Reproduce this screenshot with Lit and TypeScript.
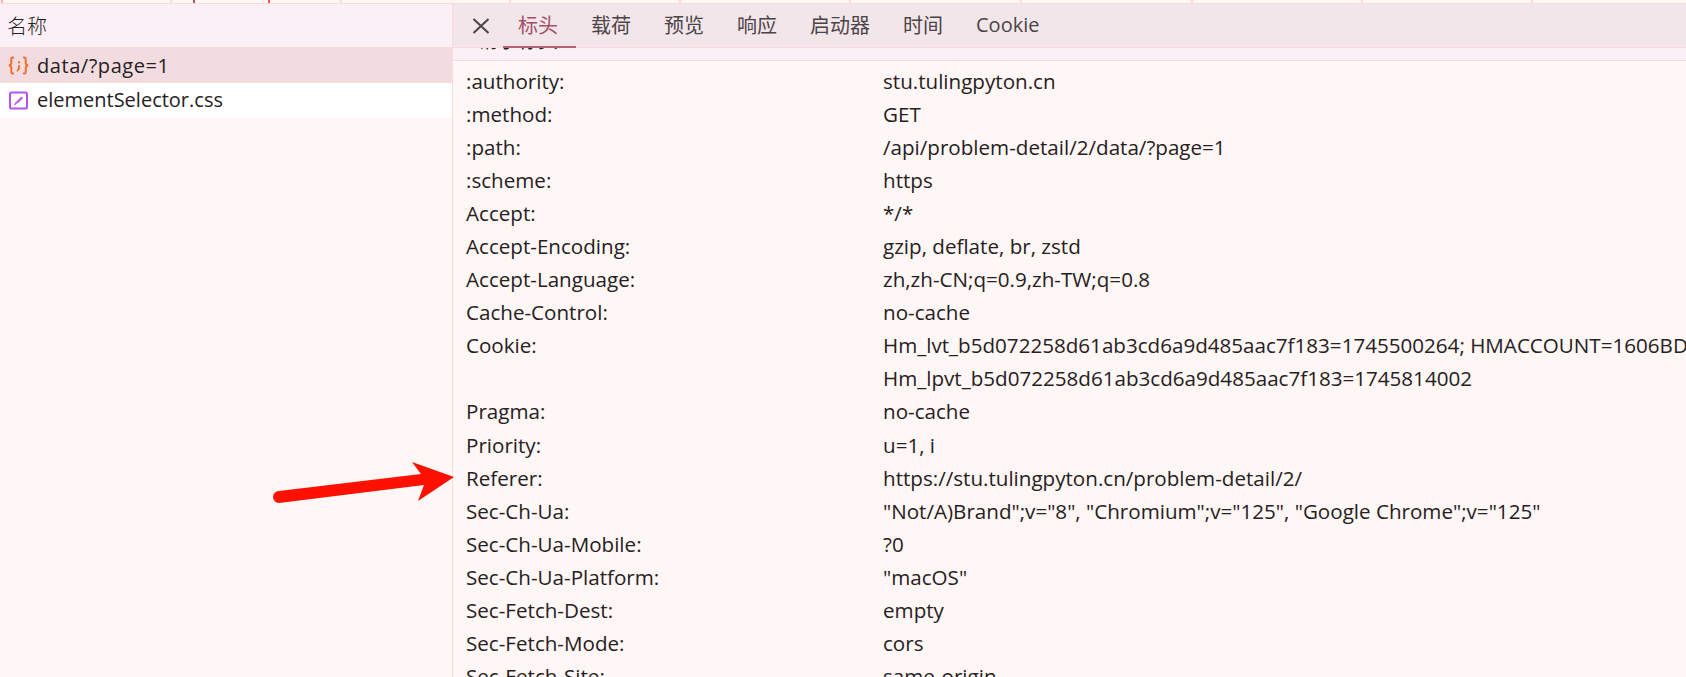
import { LitElement, html, css } from "lit";
import { customElement } from "lit/decorators.js";

const rows: [string, string][] = [
  [":authority:", "stu.tulingpyton.cn"],
  [":method:", "GET"],
  [":path:", "/api/problem-detail/2/data/?page=1"],
  [":scheme:", "https"],
  ["Accept:", "*/*"],
  ["Accept-Encoding:", "gzip, deflate, br, zstd"],
  ["Accept-Language:", "zh,zh-CN;q=0.9,zh-TW;q=0.8"],
  ["Cache-Control:", "no-cache"],
  ["Cookie:", "Hm_lvt_b5d072258d61ab3cd6a9d485aac7f183=1745500264; HMACCOUNT=1606BD"],
  ["", "Hm_lpvt_b5d072258d61ab3cd6a9d485aac7f183=1745814002"],
  ["Pragma:", "no-cache"],
  ["Priority:", "u=1, i"],
  ["Referer:", "https://stu.tulingpyton.cn/problem-detail/2/"],
  ["Sec-Ch-Ua:", "\"Not/A)Brand\";v=\"8\", \"Chromium\";v=\"125\", \"Google Chrome\";v=\"125\""],
  ["Sec-Ch-Ua-Mobile:", "?0"],
  ["Sec-Ch-Ua-Platform:", "\"macOS\""],
  ["Sec-Fetch-Dest:", "empty"],
  ["Sec-Fetch-Mode:", "cors"],
  ["Sec-Fetch-Site:", "same-origin"],
];
const tabs = ["标头", "载荷", "预览", "响应", "启动器", "时间", "Cookie"];
const strip: [number, string][] = [
  [3, "first"], [169, ""], [23, "dark"], [75, "red"], [72, ""], [169, ""], [170, ""],
  [170, ""], [171, ""], [171, ""], [170, ""], [170, ""],
];

@customElement("app-root")
export class AppRoot extends LitElement {
  static styles = css`
    :host { display: block; width: 1686px; height: 677px; overflow: hidden; position: relative; background: #fff7f6;
      font-family: "Open Sans", "Noto Sans CJK SC", sans-serif; font-size: 20.6px; color: #262022; }
    .strip { display: flex; height: 3px; border-bottom: 1px solid #fadadd; background: #fff7f6; }
    .strip span { border-right: 2px solid #fadadd; box-sizing: border-box; }
    .strip span.first { border-right-color: #fbb8bc; }
    .strip span.dark { border-right-color: #9a5a70; }
    .strip span.red { border-right-color: #f05050; }
    .main { display: flex; height: 673px; }
    .left { width: 453px; flex: none; border-right: 1px solid #fadadd; box-sizing: border-box; }
    .lhead { height: 43px; background: #fbf0f6; border-bottom: 1px solid #fadadd; display: flex; align-items: center; padding-left: 7px; font-size: 20px; font-weight: 300; }
    .file { height: 35px; display: flex; align-items: center; padding-left: 8px; gap: 8px; white-space: nowrap; font-size: 20px; }
    .file.sel { background: #f3dce0; }
    .file.sel span { letter-spacing: 0.55px; }
    .file.white { background: #fff; }
    .file.white span { margin-bottom: 2px; }
    .file svg { width: 21px; height: 21px; flex: none; }
    .right { flex: 1; min-width: 0; display: flex; flex-direction: column; }
    .tabs { height: 43px; flex: none; background: #f2e6ea; border-bottom: 1px solid #fadadd; display: flex; align-items: stretch; }
    .close { width: 44px; padding-left: 6px; flex: none; display: flex; align-items: center; justify-content: center; }
    .close svg { width: 18px; height: 16px; }
    .tab { padding: 0 18px 3px 15px; display: flex; align-items: center; color: #4b4447; white-space: nowrap; position: relative; font-size: 20px; }
    .tab.on { color: #a4506a; }
    .tab.on::after { content: ""; position: absolute; left: 0; right: 0; bottom: -1px; height: 2px; background: #b86274; }
    .sub { height: 12px; flex: none; background: #fbf0f6; border-bottom: 1px solid #f3dce0; overflow: hidden; padding-left: 25px; font-size: 20px; }
    .sub div { line-height: 20px; margin-top: -17px; }
    .body { flex: 1; overflow: hidden; padding-top: 3.5px; margin-left: -1px; }
    .row { display: flex; height: 33.05px; align-items: center; white-space: nowrap; padding-left: 14px; }
    .k { width: 417px; flex: none; }
    .arrow { position: absolute; left: 260px; top: 450px; width: 200px; height: 60px; }
  `;
  render() {
    return html`
      <div class="strip">${strip.map(([w, c]) => html`<span class="${c}" style="width:${w}px"></span>`)}</div>
      <div class="main">
        <div class="left">
          <div class="lhead">名称</div>
          <div class="file sel">
            <svg viewBox="0 0 21 21" fill="none" stroke="#f0702e" stroke-width="2">
              <path d="M6 2.500H4.800Q3.300 2.500 3.300 4V8Q3.300 10 1 10.500Q3.300 11 3.300 13V17Q3.300 18.500 4.800 18.500H6"/>
              <path d="M15 2.500H16.200Q17.700 2.500 17.700 4V8Q17.700 10 20 10.500Q17.700 11 17.700 13V17Q17.700 18.500 16.200 18.500H15"/>
              <path d="M11 7v.6" stroke-linecap="round"/>
              <path d="M11 11v2.500l-1.500 2" stroke-linecap="round"/>
            </svg>
            <span>data/?page=1</span>
          </div>
          <div class="file white">
            <svg viewBox="0 0 21 21" fill="none">
              <rect x="2" y="2.500" width="17" height="16" rx="1.500" stroke="#b450f5" stroke-width="2"/>
              <path d="M6.500 15L8.500 13L10 12.500L14.500 8L13.500 7L9 11.500L8 12.500Z" fill="#b450f5" stroke="#b450f5" stroke-width="1"/>
            </svg>
            <span>elementSelector.css</span>
          </div>
        </div>
        <div class="right">
          <div class="tabs">
            <div class="close"><svg viewBox="0 0 18 16" fill="none" stroke="#4b4447" stroke-width="2"><path d="M1.500 1l15 14M16.500 1L1.500 15"/></svg></div>
            ${tabs.map((t, i) => html`<div class="tab ${i === 0 ? "on" : ""}">${t}</div>`)}
          </div>
          <div class="sub"><div>请求标头</div></div>
          <div class="body">
            ${rows.map(([k, v]) => html`<div class="row"><span class="k">${k}</span><span>${v}</span></div>`)}
          </div>
        </div>
      </div>
      <svg class="arrow" viewBox="260 450 200 60">
        <path d="M279 491L421 474L412 462L454 477L418 501L424 485L279 503A6 6 0 0 1 279 491Z" fill="#fe1000"/>
      </svg>
    `;
  }
}
